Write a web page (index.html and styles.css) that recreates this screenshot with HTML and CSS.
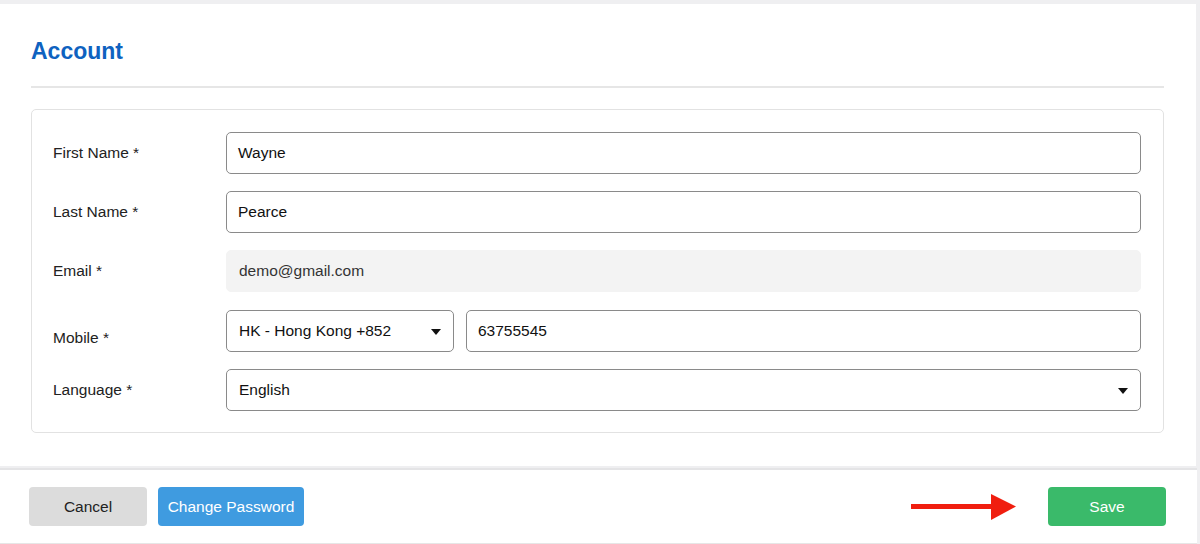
FILE: index.html
```html
<!DOCTYPE html>
<html>
<head>
<meta charset="utf-8">
<link rel="stylesheet" href="styles.css">
</head>
<body>
<div class="page">
  <section class="main">
    <h1 class="title">Account</h1>
    <div class="rule"></div>
    <div class="card">
      <div class="row">
        <label class="label">First Name *</label>
        <div class="field"><div class="input">Wayne</div></div>
      </div>
      <div class="row">
        <label class="label">Last Name *</label>
        <div class="field"><div class="input">Pearce</div></div>
      </div>
      <div class="row">
        <label class="label">Email *</label>
        <div class="field"><div class="input input-disabled">demo@gmail.com</div></div>
      </div>
      <div class="row row-mobile">
        <label class="label label-low">Mobile *</label>
        <div class="field field-split">
          <div class="input select select-country">HK - Hong Kong +852<span class="caret"></span></div>
          <div class="input">63755545</div>
        </div>
      </div>
      <div class="row">
        <label class="label">Language *</label>
        <div class="field"><div class="input select">English<span class="caret"></span></div></div>
      </div>
    </div>
  </section>
  <footer class="footer">
    <div class="left-actions">
      <button class="btn btn-cancel">Cancel</button>
      <button class="btn btn-blue">Change Password</button>
    </div>
    <div class="right-actions">
      <svg class="arrow" width="106" height="28" viewBox="0 0 106 28">
        <rect x="0" y="11" width="84" height="5" fill="#f01e0f"/>
        <polygon points="80,1 105,13.5 80,27" fill="#f01e0f"/>
      </svg>
      <button class="btn btn-save">Save</button>
    </div>
  </footer>
</div>
</body>
</html>
```

FILE: styles.css
```css
* { box-sizing: border-box; }
html, body { margin: 0; padding: 0; }
body {
  background: #efeff1;
  font-family: "Liberation Sans", Arial, Helvetica, sans-serif;
  color: #222;
  width: 1200px;
  height: 544px;
  overflow: hidden;
}
.page {
  padding-top: 4px;
  width: 1196px;
}
.main {
  background: #fff;
  padding: 34px 32px 33px 31px;
  height: 462px;
}
.title {
  margin: 0;
  font-size: 23px;
  line-height: 27px;
  font-weight: bold;
  color: #0f62c0;
}
.rule {
  margin-top: 21px;
  height: 2px;
  background: #e6e6e6;
}
.card {
  margin-top: 21px;
  border: 1px solid #e2e2e2;
  border-radius: 5px;
  padding: 22px 22px 21px 21px;
  display: flex;
  flex-direction: column;
  gap: 17px;
}
.row {
  display: flex;
  align-items: center;
}
.row-mobile { margin-top: 1px; }
.label {
  width: 173px;
  flex: none;
  font-size: 15.5px;
  color: #222;
}
.label-low { padding-top: 14px; }
.field {
  flex: 1;
  display: flex;
}
.field-split { gap: 12px; }
.input {
  flex: 1;
  height: 42px;
  border: 1px solid #8a8a8a;
  border-radius: 5px;
  padding: 0 12px 0 11px;
  display: flex;
  align-items: center;
  font-size: 15.5px;
  color: #111;
  background: #fff;
}
.input-disabled {
  background: #f3f3f3;
  border-color: #f3f3f3;
  color: #333;
  padding-left: 12px;
}
.select { justify-content: space-between; padding-left: 12px; }
.select-country { flex: none; width: 228px; }
.caret {
  width: 0;
  height: 0;
  border-left: 5px solid transparent;
  border-right: 5px solid transparent;
  border-top: 6px solid #111;
  margin-top: 2px;
}
.footer {
  margin-top: 2px;
  border-top: 2px solid #e4e4e6;
  border-bottom: 1px solid #e6e6e6;
  background: #fff;
  width: 1197px;
  height: 76px;
  padding: 17px 31px 0 29px;
  display: flex;
  justify-content: space-between;
  align-items: flex-start;
}
.left-actions, .right-actions {
  display: flex;
  align-items: center;
}
.left-actions { gap: 11px; }
.right-actions { gap: 31px; }
.btn {
  height: 39px;
  border: none;
  border-radius: 4px;
  font-family: inherit;
  font-size: 15.5px;
  padding: 0;
  cursor: pointer;
}
.btn-cancel {
  width: 118px;
  background: #dcdcdc;
  color: #222;
}
.btn-blue {
  width: 146px;
  background: #3f9be0;
  color: #fff;
}
.btn-save {
  width: 118px;
  background: #3aba6a;
  color: #fff;
}
.arrow { display: block; }
```
